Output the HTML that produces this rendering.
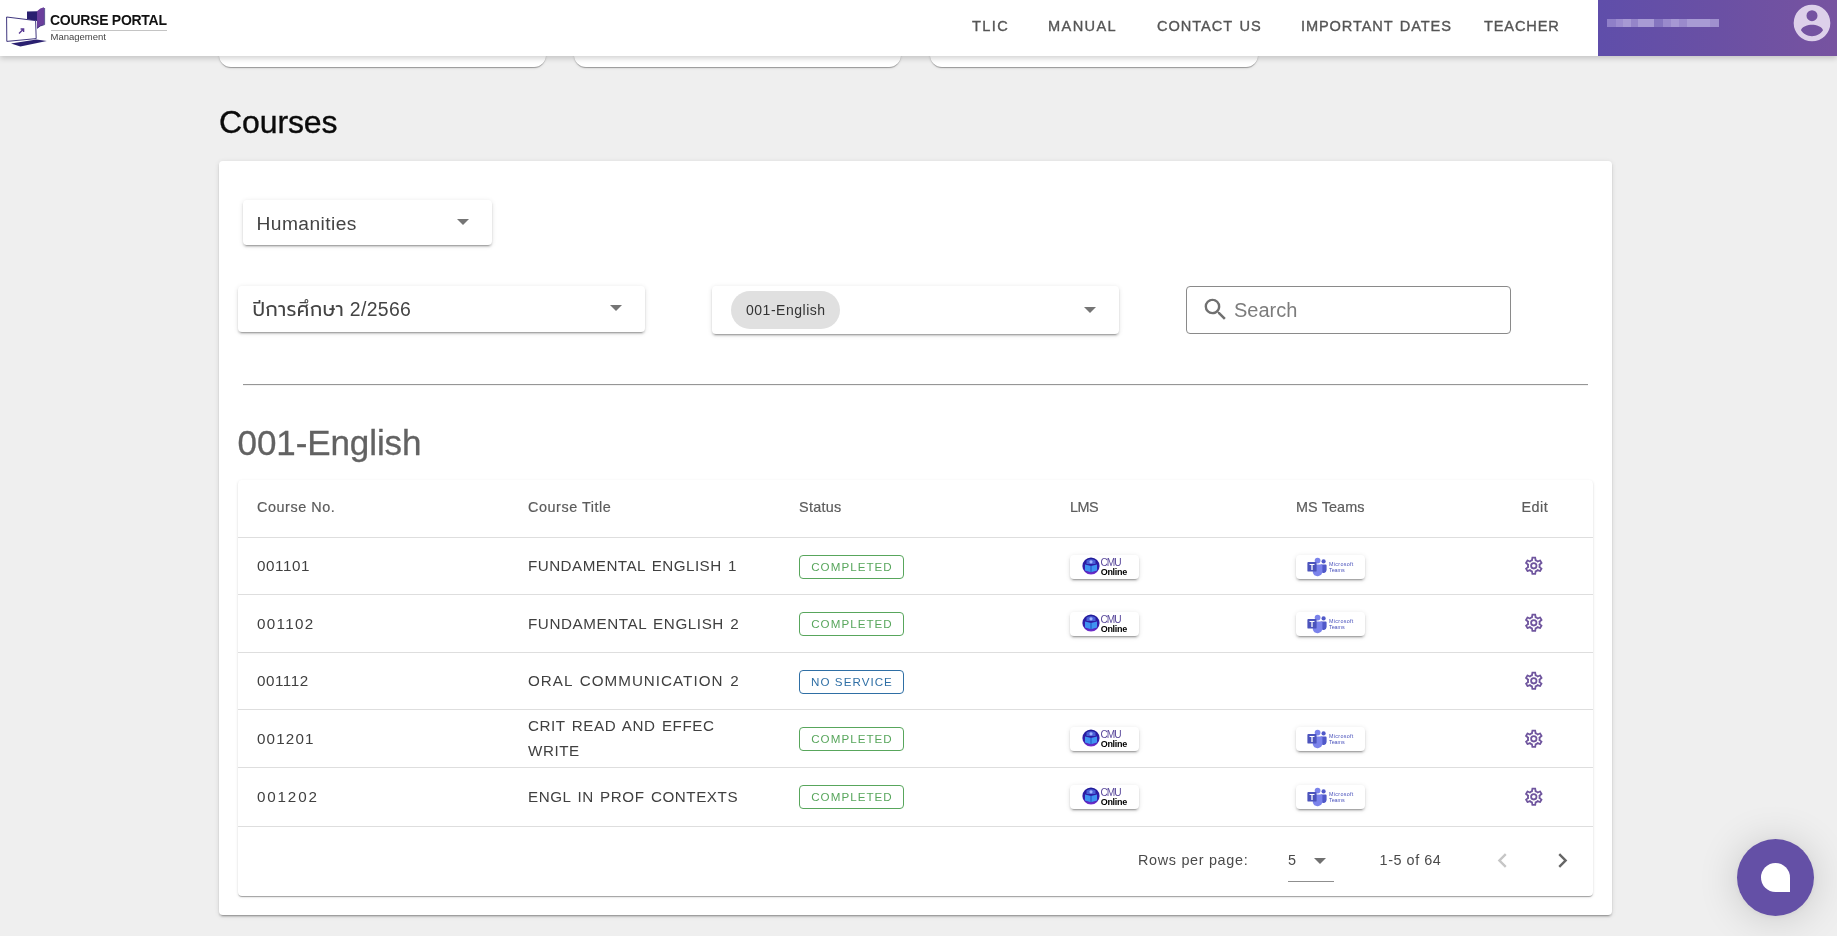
<!DOCTYPE html>
<html lang="en">
<head>
<meta charset="utf-8">
<title>Course Portal Management</title>
<style>
*{box-sizing:border-box}
html,body{margin:0;padding:0}
body{width:1837px;height:936px;overflow:hidden;background:#efefef;font-family:"Liberation Sans",sans-serif;color:#333;position:relative}
#root{position:absolute;left:0;top:0;width:1837px;height:936px;will-change:transform}
.abs{position:absolute}
.t{position:absolute;white-space:nowrap;line-height:1}
/* header */
#hdr{position:absolute;left:0;top:0;width:1837px;height:56px;background:#fff;box-shadow:0 2px 6px rgba(0,0,0,.2);z-index:5}
#user{position:absolute;left:1598px;top:0;width:239px;height:56px;background:linear-gradient(90deg,#5f4eaa 0%,#6a50a4 50%,#7753a0 100%)}
.nav{position:absolute;top:18px;font-size:14.6px;font-weight:normal;letter-spacing:1.2px;word-spacing:1.5px;color:#555;-webkit-text-stroke:.35px #555;white-space:nowrap;line-height:16px}
/* top cards */
.tc{position:absolute;top:20px;height:47px;background:#fff;border-radius:12px;box-shadow:0 2px 1px -1px rgba(0,0,0,.2),0 1px 1px 0 rgba(0,0,0,.14),0 1px 3px 0 rgba(0,0,0,.12)}
#main{position:absolute;left:219px;top:161px;width:1393px;height:754px;background:#fff;border-radius:4px;box-shadow:0 3px 1px -2px rgba(0,0,0,.2),0 2px 2px 0 rgba(0,0,0,.14),0 1px 5px 0 rgba(0,0,0,.12)}
.sel{position:absolute;background:#fff;border-radius:4px;box-shadow:0 3px 1px -2px rgba(0,0,0,.2),0 2px 2px 0 rgba(0,0,0,.14),0 1px 5px 0 rgba(0,0,0,.12)}
.arrow{position:absolute;width:0;height:0;border-left:6px solid transparent;border-right:6px solid transparent;border-top:6px solid #757575}
#tbl{position:absolute;left:238px;top:480px;width:1355px;height:416px;background:#fff;border-radius:4px;box-shadow:0 2px 1px -1px rgba(0,0,0,.2),0 1px 1px 0 rgba(0,0,0,.14),0 1px 3px 0 rgba(0,0,0,.12)}
.hl{position:absolute;left:0;width:1355px;height:1px;background:#dedede}
.th{position:absolute;font-size:14.4px;color:#5c5c5c;white-space:nowrap;line-height:16px;letter-spacing:.55px;margin-top:-1px;-webkit-text-stroke:.2px #5c5c5c}
.td{position:absolute;font-size:15.2px;color:#404040;white-space:nowrap;line-height:25.6px;word-spacing:1.6px}
.badge{position:absolute;left:561px;width:105px;height:24px;padding-left:1px;border:1px solid #58a65c;border-radius:4px;color:#58a65c;font-size:11.6px;letter-spacing:1.05px;text-align:center;line-height:22px;white-space:nowrap}
.badge.ns{border-color:#2f6fa5;color:#2f6fa5}
.btn{position:absolute;width:69px;height:24px;background:#fff;border-radius:4px;box-shadow:0 3px 1px -2px rgba(0,0,0,.2),0 2px 2px 0 rgba(0,0,0,.14),0 1px 5px 0 rgba(0,0,0,.12)}
.gear{position:absolute;left:1285.2px;width:21.6px;height:21.6px}

.ft{position:absolute;top:371px;font-size:14.4px;color:#4a4a4a;white-space:nowrap;line-height:18px;letter-spacing:.2px}
.cm1{position:absolute;left:30.5px;top:2.8px;font-size:10.2px;line-height:10px;color:#5b4a9c;white-space:nowrap;letter-spacing:-1.05px}
.cm2{position:absolute;left:30.7px;top:11.5px;font-size:9px;line-height:10px;color:#000;font-weight:bold;white-space:nowrap;letter-spacing:-.3px}
.ms1{position:absolute;left:33.2px;top:6.1px;font-size:21.6px;line-height:21.6px;color:#4b53bc;white-space:nowrap;letter-spacing:1.2px;transform:scale(.25);transform-origin:0 0}
.ms2{position:absolute;left:33.4px;top:12.1px;font-size:21.6px;line-height:21.6px;color:#4b53bc;white-space:nowrap;letter-spacing:-.2px;transform:scale(.25);transform-origin:0 0}
#fab{position:absolute;left:1737px;top:839px;width:77px;height:77px;border-radius:50%;background:#6450a6;box-shadow:0 1.3px 7.7px rgba(0,0,0,.06),0 2.6px 41px rgba(0,0,0,.16)}
#fab i{position:absolute;left:24px;top:24px;width:29px;height:29px;background:#fff;border-radius:50% 50% 0 50%}
</style>
</head>
<body>
<div id="root">

<!-- partially hidden cards above -->
<div class="tc" style="left:219px;width:327px"></div>
<div class="tc" style="left:574px;width:327px"></div>
<div class="tc" style="left:930px;width:328px"></div>

<!-- header -->
<div id="hdr">
  <svg class="abs" style="left:4px;top:4px" width="46" height="46" viewBox="0 0 46 46">
<path d="M23 7.6 L33 7.2 L33 17 L23 15.4Z" fill="#2a2070"/>
<path d="M33 7.2 Q36 3.6 40 3.2 L40 20.5 Q36 21.4 33 24.4Z" fill="#6b3f9c"/>
<path d="M33 24.4 Q36 21.4 40.6 20.6 L40.6 4" fill="none" stroke="#2a2070" stroke-width=".8"/>
<path d="M2.6 13 L31.6 16.6 L32.2 34.6 L2.8 37.4Z" fill="#fff" stroke="#2a2070" stroke-width=".9" stroke-linejoin="round"/>
<path d="M15 29.6 L19 25.6 M16.6 25 L19.6 25 L19.6 28" fill="none" stroke="#5a3a94" stroke-width="1.4"/>
<path d="M7 39.6 L32.4 35.4 L42.8 37 L16.4 42.6Z" fill="#2a2070"/>
</svg>
  <div class="t" id="logo1" style="left:50px;top:12.6px;font-size:14px;font-weight:bold;color:#111;letter-spacing:-.28px">COURSE PORTAL</div>
  <div class="abs" style="left:51px;top:30px;width:116px;height:1px;background:#c4c4c4"></div>
  <div class="t" id="logo2" style="left:50.5px;top:31.8px;font-size:9.5px;color:#444">Management</div>
  <div class="nav" style="left:972px;letter-spacing:1.37px">TLIC</div>
  <div class="nav" style="left:1048px;letter-spacing:1.37px">MANUAL</div>
  <div class="nav" style="left:1157px;letter-spacing:0.96px">CONTACT US</div>
  <div class="nav" style="left:1301px;letter-spacing:0.89px">IMPORTANT DATES</div>
  <div class="nav" style="left:1484px;letter-spacing:0.86px">TEACHER</div>
  <div id="user">
    <div class="abs" style="left:9px;top:19px;width:112px;height:8px;background:linear-gradient(90deg,#8f7fc8 0 8%,#9c8ccf 8% 14%,#a799d4 14% 21%,#9585c9 21% 28%,#a89bd4 28% 42%,#8575bf 42% 50%,#9a8acc 50% 57%,#a698d3 57% 64%,#9a8acc 64% 71%,#a89bd4 71% 92%,#a090ce 92% 100%)"></div>
    <svg class="abs" style="left:192px;top:1px" width="44" height="44" viewBox="0 0 24 24"><path fill="#ddd0ea" d="M12,2A10,10 0 0,0 2,12A10,10 0 0,0 12,22A10,10 0 0,0 22,12A10,10 0 0,0 12,2M12,5A3,3 0 0,1 15,8A3,3 0 0,1 12,11A3,3 0 0,1 9,8A3,3 0 0,1 12,5M12,19.2C9.5,19.2 7.29,17.92 6,16C6.03,14 10,12.9 12,12.9C14,12.9 17.97,14 18,16C16.71,17.92 14.5,19.2 12,19.2Z"/></svg>
  </div>
</div>

<div class="t" id="h-courses" style="left:219px;top:106.2px;font-size:32px;color:#0a0a0a;-webkit-text-stroke:.35px #0a0a0a;letter-spacing:-.1px">Courses</div>

<div id="main"></div>

<!-- selects -->
<div class="sel" style="left:243px;top:200px;width:249px;height:45px"></div>
<div class="t" id="s-hum" style="left:256.6px;top:214.2px;font-size:19.2px;color:#444;letter-spacing:.42px">Humanities</div>
<div class="arrow" style="left:457px;top:219px"></div>

<div class="sel" style="left:238px;top:286px;width:407px;height:46px"></div>
<div class="t" id="s-year" style="left:252.5px;top:299.5px;font-size:19.4px;color:#444;letter-spacing:.36px;font-family:'Liberation Sans','Prompt','Noto Sans Thai','Sarabun',sans-serif">ปีการศึกษา 2/2566</div>
<div class="arrow" style="left:610px;top:304.6px"></div>

<div class="sel" style="left:712px;top:286px;width:407px;height:48px"></div>
<div class="abs" style="left:731px;top:291px;width:109px;height:38px;border-radius:19px;background:#e0e0e0"></div>
<div class="t" id="chip" style="left:746px;top:303px;font-size:14px;color:#333;letter-spacing:.52px">001-English</div>
<div class="arrow" style="left:1084px;top:306.5px"></div>

<div class="abs" style="left:1186px;top:286px;width:325px;height:48px;border:1px solid #8a8a8a;border-radius:4px;background:#fff"></div>
<svg class="abs" style="left:1200.5px;top:295px" width="29" height="29" viewBox="0 0 24 24"><path fill="#707070" d="M9.5,3A6.5,6.5 0 0,1 16,9.5C16,11.11 15.41,12.59 14.44,13.73L14.71,14H15.5L20.5,19L19,20.5L14,15.5V14.71L13.73,14.44C12.59,15.41 11.11,16 9.5,16A6.5,6.5 0 0,1 3,9.5A6.5,6.5 0 0,1 9.5,3M9.5,5C7,5 5,7 5,9.5C5,12 7,14 9.5,14C12,14 14,12 14,9.5C14,7 12,5 9.5,5Z"/></svg>
<div class="t" id="search" style="left:1234px;top:300px;font-size:20px;color:#7c7c7c">Search</div>

<div class="abs" style="left:243px;top:384px;width:1345px;height:2px;background:linear-gradient(#969696 0 50%,#f2f2f2 50% 100%)"></div>

<div class="t" id="h-dept" style="left:237.6px;top:425px;font-size:35px;color:#626262;letter-spacing:-.1px;-webkit-text-stroke:.3px #626262">001-English</div>

<div id="tbl">
<div class="hl" style="top:57px"></div>
<div class="hl" style="top:114px"></div>
<div class="hl" style="top:172px"></div>
<div class="hl" style="top:229px"></div>
<div class="hl" style="top:287px"></div>
<div class="hl" style="top:346px"></div>
<div class="th" style="left:19px;top:20px">Course No.</div>
<div class="th" style="left:290px;top:20px">Course Title</div>
<div class="th" style="left:561px;top:20px;letter-spacing:.3px">Status</div>
<div class="th" style="left:832px;top:20px;letter-spacing:-.5px">LMS</div>
<div class="th" style="left:1058px;top:20px;letter-spacing:.12px">MS Teams</div>
<div class="th" style="left:1283.4px;top:20px;letter-spacing:.5px">Edit</div>
<div class="td" style="left:19px;top:72.55px;letter-spacing:0.6px">001101</div>
<div class="td tt" style="left:290px;top:72.55px;letter-spacing:0.47px">FUNDAMENTAL ENGLISH 1</div>
<div class="badge" style="top:75px">COMPLETED</div>
<div class="btn" style="left:832px;top:75px"><svg class="abs" style="left:12.2px;top:2.4px" width="18" height="18" viewBox="0 0 18 18"><defs><linearGradient id="cg" x1="0" y1="0" x2="0" y2="1"><stop offset="0" stop-color="#1e1a99"/><stop offset=".7" stop-color="#3a1fae"/><stop offset="1" stop-color="#7a2fd0"/></linearGradient></defs><circle cx="9" cy="9" r="8.6" fill="url(#cg)"/><path d="M4.5 3.6 Q9 .8 13.5 3.6 L13.5 7 L4.5 7Z" fill="#4a5fd6"/><circle cx="9" cy="4.8" r="1.6" fill="#9fb4ff"/><path d="M3 7.6 L9 9 L15 7.6 L15 13.6 L9 15.2 L3 13.6Z" fill="#3f93f2"/><path d="M9 9 L9 15.2" stroke="#1b3fb5" stroke-width=".8"/></svg><span class="cm1">CMU</span><span class="cm2">Online</span></div>
<div class="btn" style="left:1058px;top:75px"><svg class="abs" style="left:11px;top:2px" width="20" height="20" viewBox="0 0 20 20"><circle cx="10.6" cy="3.6" r="2.9" fill="#7b83eb"/><circle cx="16.6" cy="4.4" r="2.1" fill="#5059c9"/><path d="M13.6 7.4 h5 a1 1 0 0 1 1 1 v4.6 a3.3 3.3 0 0 1 -6 1.6z" fill="#5059c9"/><path d="M6.2 7.4 h8.2 a1 1 0 0 1 1 1 v6.2 a4.9 4.9 0 0 1 -9.6 1z" fill="#7b83eb"/><rect x="0.4" y="5" width="9.2" height="9.6" rx=".9" fill="#4b53bc"/><text x="5" y="12.9" font-family="Liberation Sans, sans-serif" font-weight="bold" font-size="8.2" text-anchor="middle" fill="#fff">T</text></svg><span class="ms1">Microsoft</span><span class="ms2">Teams</span></div>
<svg class="gear" style="top:74.9px" viewBox="0 0 24 24"><path fill="#6f559e" d="M12,8A4,4 0 0,1 16,12A4,4 0 0,1 12,16A4,4 0 0,1 8,12A4,4 0 0,1 12,8M12,10A2,2 0 0,0 10,12A2,2 0 0,0 12,14A2,2 0 0,0 14,12A2,2 0 0,0 12,10M10,22C9.75,22 9.54,21.82 9.5,21.58L9.13,18.93C8.5,18.68 7.96,18.34 7.44,17.94L4.95,18.95C4.73,19.03 4.46,18.95 4.34,18.73L2.34,15.27C2.21,15.05 2.27,14.78 2.46,14.63L4.57,12.97L4.5,12L4.57,11L2.46,9.37C2.27,9.22 2.21,8.95 2.34,8.73L4.34,5.27C4.46,5.05 4.73,4.96 4.95,5.05L7.44,6.05C7.96,5.66 8.5,5.32 9.13,5.07L9.5,2.42C9.54,2.18 9.75,2 10,2H14C14.25,2 14.46,2.18 14.5,2.42L14.87,5.07C15.5,5.32 16.04,5.66 16.56,6.05L19.05,5.05C19.27,4.96 19.54,5.05 19.66,5.27L21.66,8.73C21.79,8.95 21.73,9.22 21.54,9.37L19.43,11L19.5,12L19.43,13L21.54,14.63C21.73,14.78 21.79,15.05 21.66,15.27L19.66,18.73C19.54,18.95 19.27,19.04 19.05,18.95L16.56,17.95C16.04,18.34 15.5,18.68 14.87,18.93L14.5,21.58C14.46,21.82 14.25,22 14,22H10M11.25,4L10.88,6.61C9.68,6.86 8.62,7.5 7.85,8.39L5.44,7.35L4.69,8.65L6.8,10.2C6.4,11.37 6.4,12.64 6.8,13.8L4.68,15.36L5.43,16.66L7.86,15.62C8.63,16.5 9.68,17.14 10.87,17.38L11.24,20H12.76L13.13,17.39C14.32,17.14 15.37,16.5 16.14,15.62L18.57,16.66L19.32,15.36L17.2,13.81C17.6,12.64 17.6,11.37 17.2,10.2L19.31,8.65L18.56,7.35L16.15,8.39C15.38,7.5 14.32,6.86 13.12,6.62L12.75,4H11.25Z"/></svg>
<div class="td" style="left:19px;top:130.70px;letter-spacing:1.31px">001102</div>
<div class="td tt" style="left:290px;top:130.70px;letter-spacing:0.59px">FUNDAMENTAL ENGLISH 2</div>
<div class="badge" style="top:132px">COMPLETED</div>
<div class="btn" style="left:832px;top:132px"><svg class="abs" style="left:12.2px;top:2.4px" width="18" height="18" viewBox="0 0 18 18"><defs><linearGradient id="cg" x1="0" y1="0" x2="0" y2="1"><stop offset="0" stop-color="#1e1a99"/><stop offset=".7" stop-color="#3a1fae"/><stop offset="1" stop-color="#7a2fd0"/></linearGradient></defs><circle cx="9" cy="9" r="8.6" fill="url(#cg)"/><path d="M4.5 3.6 Q9 .8 13.5 3.6 L13.5 7 L4.5 7Z" fill="#4a5fd6"/><circle cx="9" cy="4.8" r="1.6" fill="#9fb4ff"/><path d="M3 7.6 L9 9 L15 7.6 L15 13.6 L9 15.2 L3 13.6Z" fill="#3f93f2"/><path d="M9 9 L9 15.2" stroke="#1b3fb5" stroke-width=".8"/></svg><span class="cm1">CMU</span><span class="cm2">Online</span></div>
<div class="btn" style="left:1058px;top:132px"><svg class="abs" style="left:11px;top:2px" width="20" height="20" viewBox="0 0 20 20"><circle cx="10.6" cy="3.6" r="2.9" fill="#7b83eb"/><circle cx="16.6" cy="4.4" r="2.1" fill="#5059c9"/><path d="M13.6 7.4 h5 a1 1 0 0 1 1 1 v4.6 a3.3 3.3 0 0 1 -6 1.6z" fill="#5059c9"/><path d="M6.2 7.4 h8.2 a1 1 0 0 1 1 1 v6.2 a4.9 4.9 0 0 1 -9.6 1z" fill="#7b83eb"/><rect x="0.4" y="5" width="9.2" height="9.6" rx=".9" fill="#4b53bc"/><text x="5" y="12.9" font-family="Liberation Sans, sans-serif" font-weight="bold" font-size="8.2" text-anchor="middle" fill="#fff">T</text></svg><span class="ms1">Microsoft</span><span class="ms2">Teams</span></div>
<svg class="gear" style="top:132.1px" viewBox="0 0 24 24"><path fill="#6f559e" d="M12,8A4,4 0 0,1 16,12A4,4 0 0,1 12,16A4,4 0 0,1 8,12A4,4 0 0,1 12,8M12,10A2,2 0 0,0 10,12A2,2 0 0,0 12,14A2,2 0 0,0 14,12A2,2 0 0,0 12,10M10,22C9.75,22 9.54,21.82 9.5,21.58L9.13,18.93C8.5,18.68 7.96,18.34 7.44,17.94L4.95,18.95C4.73,19.03 4.46,18.95 4.34,18.73L2.34,15.27C2.21,15.05 2.27,14.78 2.46,14.63L4.57,12.97L4.5,12L4.57,11L2.46,9.37C2.27,9.22 2.21,8.95 2.34,8.73L4.34,5.27C4.46,5.05 4.73,4.96 4.95,5.05L7.44,6.05C7.96,5.66 8.5,5.32 9.13,5.07L9.5,2.42C9.54,2.18 9.75,2 10,2H14C14.25,2 14.46,2.18 14.5,2.42L14.87,5.07C15.5,5.32 16.04,5.66 16.56,6.05L19.05,5.05C19.27,4.96 19.54,5.05 19.66,5.27L21.66,8.73C21.79,8.95 21.73,9.22 21.54,9.37L19.43,11L19.5,12L19.43,13L21.54,14.63C21.73,14.78 21.79,15.05 21.66,15.27L19.66,18.73C19.54,18.95 19.27,19.04 19.05,18.95L16.56,17.95C16.04,18.34 15.5,18.68 14.87,18.93L14.5,21.58C14.46,21.82 14.25,22 14,22H10M11.25,4L10.88,6.61C9.68,6.86 8.62,7.5 7.85,8.39L5.44,7.35L4.69,8.65L6.8,10.2C6.4,11.37 6.4,12.64 6.8,13.8L4.68,15.36L5.43,16.66L7.86,15.62C8.63,16.5 9.68,17.14 10.87,17.38L11.24,20H12.76L13.13,17.39C14.32,17.14 15.37,16.5 16.14,15.62L18.57,16.66L19.32,15.36L17.2,13.81C17.6,12.64 17.6,11.37 17.2,10.2L19.31,8.65L18.56,7.35L16.15,8.39C15.38,7.5 14.32,6.86 13.12,6.62L12.75,4H11.25Z"/></svg>
<div class="td" style="left:19px;top:188.00px;letter-spacing:0.55px">001112</div>
<div class="td tt" style="left:290px;top:188.00px;letter-spacing:1.02px">ORAL COMMUNICATION 2</div>
<div class="badge ns" style="top:190px">NO SERVICE</div>
<svg class="gear" style="top:190.2px" viewBox="0 0 24 24"><path fill="#6f559e" d="M12,8A4,4 0 0,1 16,12A4,4 0 0,1 12,16A4,4 0 0,1 8,12A4,4 0 0,1 12,8M12,10A2,2 0 0,0 10,12A2,2 0 0,0 12,14A2,2 0 0,0 14,12A2,2 0 0,0 12,10M10,22C9.75,22 9.54,21.82 9.5,21.58L9.13,18.93C8.5,18.68 7.96,18.34 7.44,17.94L4.95,18.95C4.73,19.03 4.46,18.95 4.34,18.73L2.34,15.27C2.21,15.05 2.27,14.78 2.46,14.63L4.57,12.97L4.5,12L4.57,11L2.46,9.37C2.27,9.22 2.21,8.95 2.34,8.73L4.34,5.27C4.46,5.05 4.73,4.96 4.95,5.05L7.44,6.05C7.96,5.66 8.5,5.32 9.13,5.07L9.5,2.42C9.54,2.18 9.75,2 10,2H14C14.25,2 14.46,2.18 14.5,2.42L14.87,5.07C15.5,5.32 16.04,5.66 16.56,6.05L19.05,5.05C19.27,4.96 19.54,5.05 19.66,5.27L21.66,8.73C21.79,8.95 21.73,9.22 21.54,9.37L19.43,11L19.5,12L19.43,13L21.54,14.63C21.73,14.78 21.79,15.05 21.66,15.27L19.66,18.73C19.54,18.95 19.27,19.04 19.05,18.95L16.56,17.95C16.04,18.34 15.5,18.68 14.87,18.93L14.5,21.58C14.46,21.82 14.25,22 14,22H10M11.25,4L10.88,6.61C9.68,6.86 8.62,7.5 7.85,8.39L5.44,7.35L4.69,8.65L6.8,10.2C6.4,11.37 6.4,12.64 6.8,13.8L4.68,15.36L5.43,16.66L7.86,15.62C8.63,16.5 9.68,17.14 10.87,17.38L11.24,20H12.76L13.13,17.39C14.32,17.14 15.37,16.5 16.14,15.62L18.57,16.66L19.32,15.36L17.2,13.81C17.6,12.64 17.6,11.37 17.2,10.2L19.31,8.65L18.56,7.35L16.15,8.39C15.38,7.5 14.32,6.86 13.12,6.62L12.75,4H11.25Z"/></svg>
<div class="td" style="left:19px;top:245.65px;letter-spacing:1.16px">001201</div>
<div class="td tt" style="left:290px;top:232.85px;letter-spacing:0.56px">CRIT READ AND EFFEC<br>WRITE</div>
<div class="badge" style="top:247px">COMPLETED</div>
<div class="btn" style="left:832px;top:247px"><svg class="abs" style="left:12.2px;top:2.4px" width="18" height="18" viewBox="0 0 18 18"><defs><linearGradient id="cg" x1="0" y1="0" x2="0" y2="1"><stop offset="0" stop-color="#1e1a99"/><stop offset=".7" stop-color="#3a1fae"/><stop offset="1" stop-color="#7a2fd0"/></linearGradient></defs><circle cx="9" cy="9" r="8.6" fill="url(#cg)"/><path d="M4.5 3.6 Q9 .8 13.5 3.6 L13.5 7 L4.5 7Z" fill="#4a5fd6"/><circle cx="9" cy="4.8" r="1.6" fill="#9fb4ff"/><path d="M3 7.6 L9 9 L15 7.6 L15 13.6 L9 15.2 L3 13.6Z" fill="#3f93f2"/><path d="M9 9 L9 15.2" stroke="#1b3fb5" stroke-width=".8"/></svg><span class="cm1">CMU</span><span class="cm2">Online</span></div>
<div class="btn" style="left:1058px;top:247px"><svg class="abs" style="left:11px;top:2px" width="20" height="20" viewBox="0 0 20 20"><circle cx="10.6" cy="3.6" r="2.9" fill="#7b83eb"/><circle cx="16.6" cy="4.4" r="2.1" fill="#5059c9"/><path d="M13.6 7.4 h5 a1 1 0 0 1 1 1 v4.6 a3.3 3.3 0 0 1 -6 1.6z" fill="#5059c9"/><path d="M6.2 7.4 h8.2 a1 1 0 0 1 1 1 v6.2 a4.9 4.9 0 0 1 -9.6 1z" fill="#7b83eb"/><rect x="0.4" y="5" width="9.2" height="9.6" rx=".9" fill="#4b53bc"/><text x="5" y="12.9" font-family="Liberation Sans, sans-serif" font-weight="bold" font-size="8.2" text-anchor="middle" fill="#fff">T</text></svg><span class="ms1">Microsoft</span><span class="ms2">Teams</span></div>
<svg class="gear" style="top:248.0px" viewBox="0 0 24 24"><path fill="#6f559e" d="M12,8A4,4 0 0,1 16,12A4,4 0 0,1 12,16A4,4 0 0,1 8,12A4,4 0 0,1 12,8M12,10A2,2 0 0,0 10,12A2,2 0 0,0 12,14A2,2 0 0,0 14,12A2,2 0 0,0 12,10M10,22C9.75,22 9.54,21.82 9.5,21.58L9.13,18.93C8.5,18.68 7.96,18.34 7.44,17.94L4.95,18.95C4.73,19.03 4.46,18.95 4.34,18.73L2.34,15.27C2.21,15.05 2.27,14.78 2.46,14.63L4.57,12.97L4.5,12L4.57,11L2.46,9.37C2.27,9.22 2.21,8.95 2.34,8.73L4.34,5.27C4.46,5.05 4.73,4.96 4.95,5.05L7.44,6.05C7.96,5.66 8.5,5.32 9.13,5.07L9.5,2.42C9.54,2.18 9.75,2 10,2H14C14.25,2 14.46,2.18 14.5,2.42L14.87,5.07C15.5,5.32 16.04,5.66 16.56,6.05L19.05,5.05C19.27,4.96 19.54,5.05 19.66,5.27L21.66,8.73C21.79,8.95 21.73,9.22 21.54,9.37L19.43,11L19.5,12L19.43,13L21.54,14.63C21.73,14.78 21.79,15.05 21.66,15.27L19.66,18.73C19.54,18.95 19.27,19.04 19.05,18.95L16.56,17.95C16.04,18.34 15.5,18.68 14.87,18.93L14.5,21.58C14.46,21.82 14.25,22 14,22H10M11.25,4L10.88,6.61C9.68,6.86 8.62,7.5 7.85,8.39L5.44,7.35L4.69,8.65L6.8,10.2C6.4,11.37 6.4,12.64 6.8,13.8L4.68,15.36L5.43,16.66L7.86,15.62C8.63,16.5 9.68,17.14 10.87,17.38L11.24,20H12.76L13.13,17.39C14.32,17.14 15.37,16.5 16.14,15.62L18.57,16.66L19.32,15.36L17.2,13.81C17.6,12.64 17.6,11.37 17.2,10.2L19.31,8.65L18.56,7.35L16.15,8.39C15.38,7.5 14.32,6.86 13.12,6.62L12.75,4H11.25Z"/></svg>
<div class="td" style="left:19px;top:304.10px;letter-spacing:1.84px">001202</div>
<div class="td tt" style="left:290px;top:304.10px;letter-spacing:0.56px">ENGL IN PROF CONTEXTS</div>
<div class="badge" style="top:305px">COMPLETED</div>
<div class="btn" style="left:832px;top:305px"><svg class="abs" style="left:12.2px;top:2.4px" width="18" height="18" viewBox="0 0 18 18"><defs><linearGradient id="cg" x1="0" y1="0" x2="0" y2="1"><stop offset="0" stop-color="#1e1a99"/><stop offset=".7" stop-color="#3a1fae"/><stop offset="1" stop-color="#7a2fd0"/></linearGradient></defs><circle cx="9" cy="9" r="8.6" fill="url(#cg)"/><path d="M4.5 3.6 Q9 .8 13.5 3.6 L13.5 7 L4.5 7Z" fill="#4a5fd6"/><circle cx="9" cy="4.8" r="1.6" fill="#9fb4ff"/><path d="M3 7.6 L9 9 L15 7.6 L15 13.6 L9 15.2 L3 13.6Z" fill="#3f93f2"/><path d="M9 9 L9 15.2" stroke="#1b3fb5" stroke-width=".8"/></svg><span class="cm1">CMU</span><span class="cm2">Online</span></div>
<div class="btn" style="left:1058px;top:305px"><svg class="abs" style="left:11px;top:2px" width="20" height="20" viewBox="0 0 20 20"><circle cx="10.6" cy="3.6" r="2.9" fill="#7b83eb"/><circle cx="16.6" cy="4.4" r="2.1" fill="#5059c9"/><path d="M13.6 7.4 h5 a1 1 0 0 1 1 1 v4.6 a3.3 3.3 0 0 1 -6 1.6z" fill="#5059c9"/><path d="M6.2 7.4 h8.2 a1 1 0 0 1 1 1 v6.2 a4.9 4.9 0 0 1 -9.6 1z" fill="#7b83eb"/><rect x="0.4" y="5" width="9.2" height="9.6" rx=".9" fill="#4b53bc"/><text x="5" y="12.9" font-family="Liberation Sans, sans-serif" font-weight="bold" font-size="8.2" text-anchor="middle" fill="#fff">T</text></svg><span class="ms1">Microsoft</span><span class="ms2">Teams</span></div>
<svg class="gear" style="top:306.3px" viewBox="0 0 24 24"><path fill="#6f559e" d="M12,8A4,4 0 0,1 16,12A4,4 0 0,1 12,16A4,4 0 0,1 8,12A4,4 0 0,1 12,8M12,10A2,2 0 0,0 10,12A2,2 0 0,0 12,14A2,2 0 0,0 14,12A2,2 0 0,0 12,10M10,22C9.75,22 9.54,21.82 9.5,21.58L9.13,18.93C8.5,18.68 7.96,18.34 7.44,17.94L4.95,18.95C4.73,19.03 4.46,18.95 4.34,18.73L2.34,15.27C2.21,15.05 2.27,14.78 2.46,14.63L4.57,12.97L4.5,12L4.57,11L2.46,9.37C2.27,9.22 2.21,8.95 2.34,8.73L4.34,5.27C4.46,5.05 4.73,4.96 4.95,5.05L7.44,6.05C7.96,5.66 8.5,5.32 9.13,5.07L9.5,2.42C9.54,2.18 9.75,2 10,2H14C14.25,2 14.46,2.18 14.5,2.42L14.87,5.07C15.5,5.32 16.04,5.66 16.56,6.05L19.05,5.05C19.27,4.96 19.54,5.05 19.66,5.27L21.66,8.73C21.79,8.95 21.73,9.22 21.54,9.37L19.43,11L19.5,12L19.43,13L21.54,14.63C21.73,14.78 21.79,15.05 21.66,15.27L19.66,18.73C19.54,18.95 19.27,19.04 19.05,18.95L16.56,17.95C16.04,18.34 15.5,18.68 14.87,18.93L14.5,21.58C14.46,21.82 14.25,22 14,22H10M11.25,4L10.88,6.61C9.68,6.86 8.62,7.5 7.85,8.39L5.44,7.35L4.69,8.65L6.8,10.2C6.4,11.37 6.4,12.64 6.8,13.8L4.68,15.36L5.43,16.66L7.86,15.62C8.63,16.5 9.68,17.14 10.87,17.38L11.24,20H12.76L13.13,17.39C14.32,17.14 15.37,16.5 16.14,15.62L18.57,16.66L19.32,15.36L17.2,13.81C17.6,12.64 17.6,11.37 17.2,10.2L19.31,8.65L18.56,7.35L16.15,8.39C15.38,7.5 14.32,6.86 13.12,6.62L12.75,4H11.25Z"/></svg>
<div class="ft" style="left:900px;letter-spacing:.68px">Rows per page:</div>
<div class="ft" style="left:1050px">5</div>
<div class="arrow" style="left:1076px;top:378px;border-top-color:#707070"></div>
<div class="abs" style="left:1050px;top:401px;width:46px;height:1px;background:#8f8f8f"></div>
<div class="ft" style="left:1141.6px;letter-spacing:.55px">1-5 of 64</div>
<svg class="abs" style="left:1249.5px;top:365.5px" width="29" height="29" viewBox="0 0 24 24"><path d="M15.41,16.58L10.83,12L15.41,7.41L14,6L8,12L14,18L15.41,16.58Z" fill="#c6c6c6"/></svg>
<svg class="abs" style="left:1309.5px;top:365.5px" width="29" height="29" viewBox="0 0 24 24"><path d="M8.59,16.58L13.17,12L8.59,7.41L10,6L16,12L10,18L8.59,16.58Z" fill="#666"/></svg>
</div>

<div id="fab"><i></i></div>
</div>
</body>
</html>
